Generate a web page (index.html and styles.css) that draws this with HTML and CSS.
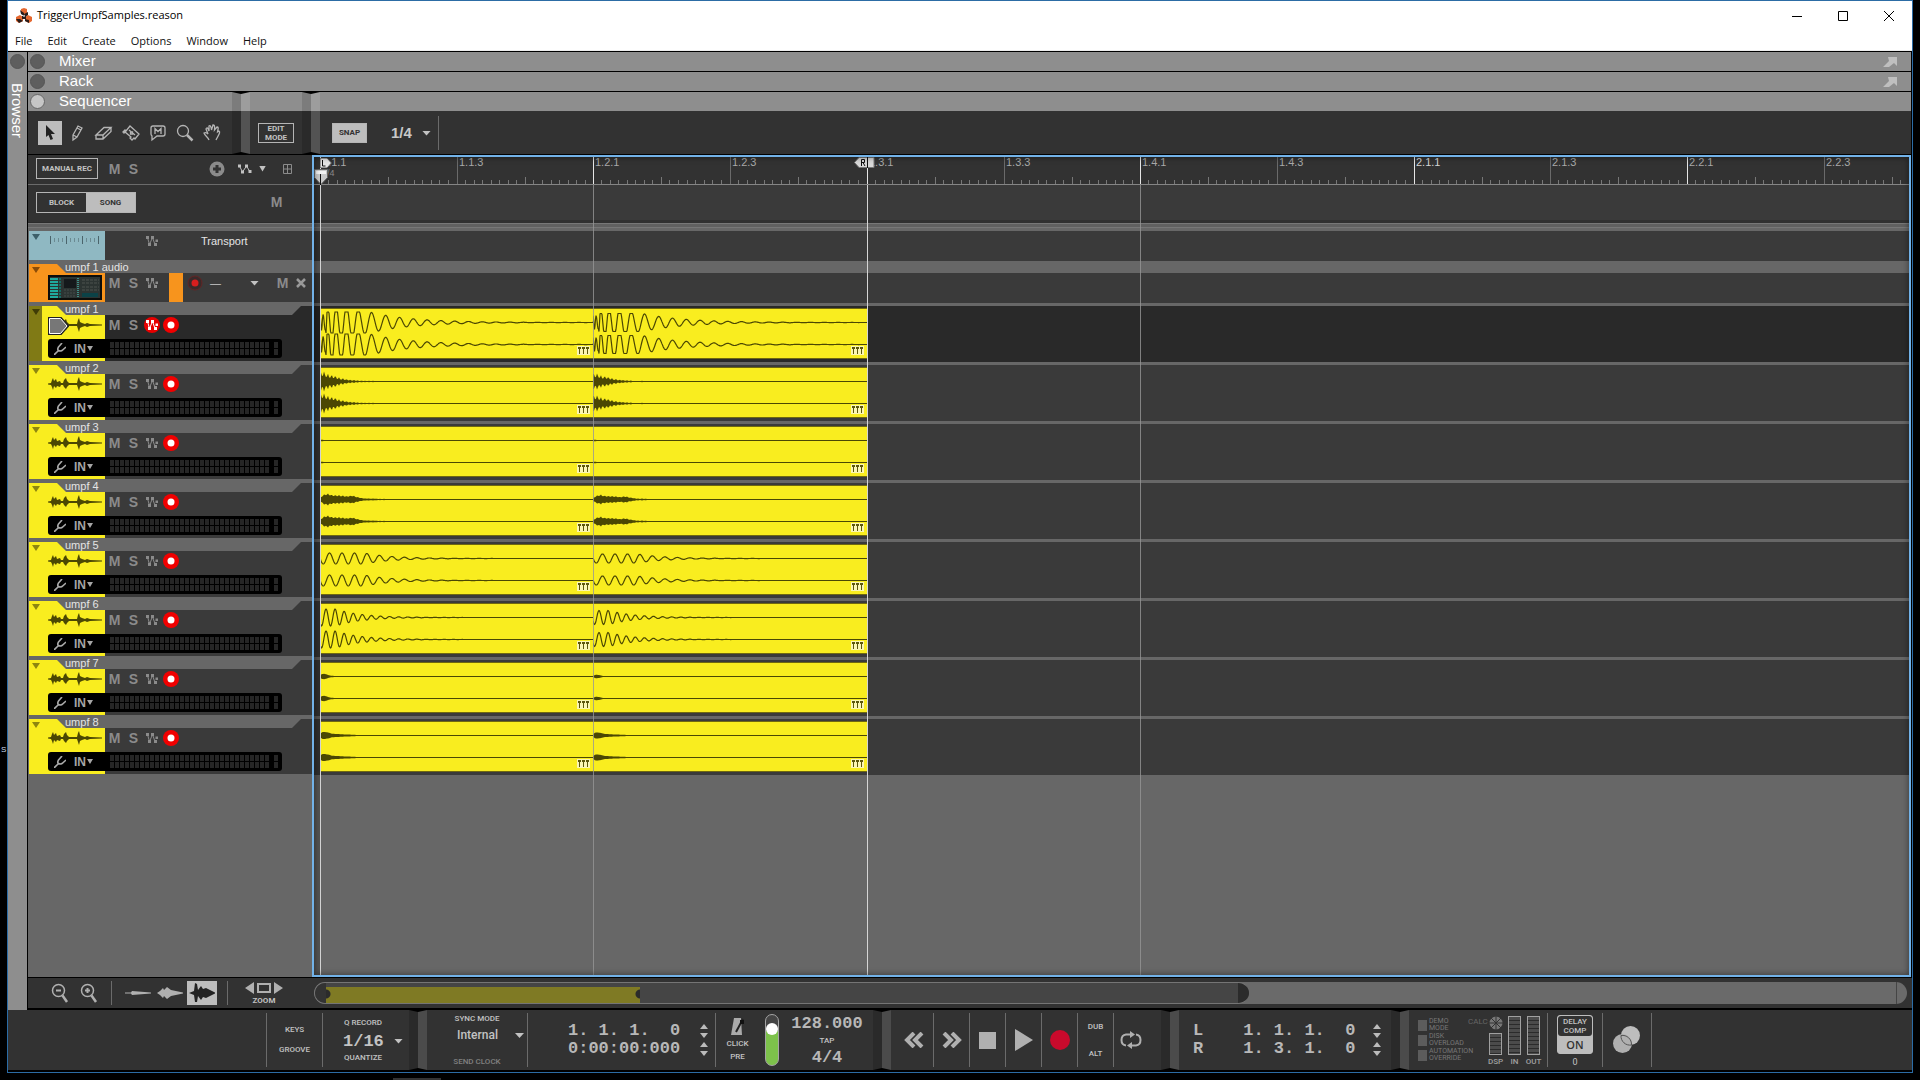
FILE: index.html
```html
<!DOCTYPE html>
<html lang="en">
<head>
<meta charset="utf-8">
<title>TriggerUmpfSamples.reason</title>
<link rel="stylesheet" href="styles.css">
</head>
<body>
<svg class="sprite" aria-hidden="true">
  <symbol id="auto" viewBox="0 0 14 12"><path d="M2.500 2.500 4.500 9.500 7.500 2.500 10 9.500" fill="none" stroke="currentColor"/><path d="M1 1h3v3H1zM3 8h3v3H3zM6 1h3v3H6zM9 8h3v3H9zM10.500 4.500H13V7h-2.500z" fill="currentColor"/></symbol>
  <symbol id="auto-wide" viewBox="0 0 14 12"><path d="M1.500 3 4.500 9 8.500 3 11.500 8" fill="none" stroke="currentColor"/><path d="M0 1.500h3v3H0zM3 7.500h3v3H3zM7 1.500h3v3H7zM10.500 7h3v3h-3z" fill="currentColor"/></symbol>
  <symbol id="wave" viewBox="0 0 54 16"><path d="M0 7.500 3 7 4 4 5 2 6 5 8 3 9 6 12 5 13 7 15 7 16 4 18 2 19 5 21 7 29 7 30 3 31 1 32 5 34 6 37 7 39 6 42 7 54 7.500V8.500L42 9 39 10 37 9 34 10 32 11 31 15 30 12 29 9 21 9 19 11 18 13 16 11 15 9 13 9 12 11 9 10 8 12 6 10 5 14 4 11 3 9 0 8.500z" fill="#4b4703"/></symbol>
  <symbol id="fork" viewBox="0 0 12 12"><path d="M0 12 4.500 7.500M8 0 4.500 4Q3 6.500 4.500 7.500T8 7.500L12 4" fill="none" stroke="#aaa" stroke-width="1.600"/></symbol>
  <symbol id="comp" viewBox="0 0 13 9"><path d="M0 0h13v9H0z" fill="#fbf6b4"/><path d="M1 1h3v2H3v5H2V3H1zM5 1h3v2H7v5H6V3H5zM9 1h3v2h-1v5h-1V3H9z" fill="#5c560b"/></symbol>
  <symbol id="popout" viewBox="0 0 14 10"><path d="M5 0h9v9l-3-3-5 4H0l6-6z" fill="#bfbfbf"/></symbol>
  <symbol id="ticks" viewBox="0 0 137 8"><path d="M8.500 4v4M17.500 4v4M25.500 4v4M34.500 4v4M42.500 4v4M51.500 4v4M59.500 4v4M68.500 1v7M76.500 4v4M85.500 4v4M94.500 4v4M102.500 4v4M111.500 4v4M119.500 4v4M128.500 4v4" stroke="#777"/></symbol>
  <symbol id="spin-up" viewBox="0 0 8 5"><path d="M0 5 4 0 8 5z" fill="#bbb"/></symbol>
  <symbol id="spin-down" viewBox="0 0 8 5"><path d="M0 0 4 5 8 0z" fill="#bbb"/></symbol>
</svg>

<div class="window">
  <header class="titlebar">
    <svg class="logo" viewBox="0 0 16 16"><path d="M5 1 8 0 11 1 11 5 8 7 5 5z" fill="#e4672f"/><path d="M0 9 4 7 7 9 7 13 3 15 0 13z" fill="#e4672f"/><path d="M9 9 12 7 16 9 16 13 13 15 9 13z" fill="#e4672f"/><path d="M4 2 8 5 8 8 5 6zM8 6 12 4 12 7 9 9zM0 11 4 11 7 13 3 15zM9 11l4 1v3l-4-2zM6 8h4v3H6z" fill="#2a1d1a"/><circle cx="8" cy="8" r="1" fill="#bbb"/></svg>
    <h1>TriggerUmpfSamples.reason</h1>
    <div class="winbtns">
      <button aria-label="Minimize"><svg width="10" height="10"><path d="M0 5.500h10" stroke="#000"/></svg></button>
      <button aria-label="Maximize"><svg width="10" height="10"><path d="M.5.5h9v9h-9z" fill="none" stroke="#000"/></svg></button>
      <button aria-label="Close"><svg width="10" height="10"><path d="M0 0 10 10M10 0 0 10" stroke="#000"/></svg></button>
    </div>
  </header>
  <nav class="menu">
    <a href="#">File</a><a href="#">Edit</a><a href="#">Create</a><a href="#">Options</a><a href="#">Window</a><a href="#">Help</a>
  </nav>

  <div class="workspace">
    <aside class="browser"><button class="dot" aria-label="Show browser"></button><span>Browser</span></aside>
    <main class="main">
      <div class="area"><button class="dot" aria-label="Show mixer"></button><h2>Mixer</h2><svg class="popout"><use href="#popout"/></svg></div>
      <div class="area"><button class="dot" aria-label="Show rack"></button><h2>Rack</h2><svg class="popout"><use href="#popout"/></svg></div>

      <div class="toolbar">
        <section class="module module-tools">
          <div class="modhead"><button class="dot on" aria-label="Show sequencer"></button><h2>Sequencer</h2></div>
          <div class="modbody tools">
            <button class="tool active" aria-label="Selection"><svg viewBox="0 0 24 24"><path d="M8 4 17 13 13 13 15 18 12.500 19 10.500 14 8 16z" fill="#222"/></svg></button>
            <button class="tool" aria-label="Pencil"><svg viewBox="0 0 24 24"><path d="M8 14 13 5 17 7 12 16 8 19zM8 14l4 2M12 7l4 2" class="ln"/></svg></button>
            <button class="tool" aria-label="Eraser"><svg viewBox="0 0 24 24"><path d="M4 14 12 6.500H19L11 14zM4 14v4h7l8-7.500v-4M11 14v4" class="ln"/></svg></button>
            <button class="tool" aria-label="Razor"><svg viewBox="0 0 24 24"><path d="M4 11 6 9 7 10 11 5 20 13 16 18 15 17 13 19 11 17 12 16 6 11 5 12z" class="ln"/><path d="M10 9l6 5M11.500 11h2v2h-2z" class="ln"/></svg></button>
            <button class="tool" aria-label="Mute"><svg viewBox="0 0 24 24"><path d="M7 5h10q2 0 2 2v6q0 2-2 2h-6l-5 4V15q-1-1-1-2V7q0-2 2-2zM9 13V7.500l3 3 3-3V13" class="ln"/></svg></button>
            <button class="tool" aria-label="Magnifying glass"><svg viewBox="0 0 24 24"><circle cx="10" cy="10" r="5.500" class="ln"/><path d="M14 14 19.500 19.500" stroke="#b5b5b5" stroke-width="2.500"/></svg></button>
            <button class="tool" aria-label="Hand"><svg viewBox="0 0 24 24"><path d="M9 19C8 16 5 15 4 12 6 11 7 12 8 13L6 8C7 6 8 7 9 10L9 5C10 4 11 5 11.500 9L13 4C14 4 15 4 14.500 9L17 6C19 6 18 8 17.500 11L19 10C21 11 18 15 16 19" class="ln"/></svg></button>
          </div>
        </section>
        <div class="bevel tall"><i></i></div>
        <section class="module module-edit">
          <div class="modhead"></div>
          <div class="modbody"><button class="boxed edit">EDIT<br>MODE</button></div>
        </section>
        <div class="bevel tall"><i></i></div>
        <section class="module module-snap">
          <div class="modhead"></div>
          <div class="modbody snaprow">
            <button class="boxed solid snap">SNAP</button>
            <label class="pick snapval"><select aria-label="Snap value"><option>1/4</option></select><i class="caret"></i></label>
            <i class="vline"></i>
          </div>
        </section>
      </div>

      <div class="sequencer">
        <section class="tracks">
          <div class="row rec">
            <button class="boxed manual">MANUAL REC</button>
            <button class="ms">M</button><button class="ms">S</button>
            <span class="grow"></span>
            <button class="add" aria-label="Add lane"><svg width="16" height="16"><circle cx="8" cy="8" r="7.500" fill="#8b8b8b"/><path d="M8 4v8M4 8h8" stroke="#333" stroke-width="3"/></svg></button>
            <button class="auto" aria-label="Track parameter automation"><svg width="14" height="12"><use href="#auto-wide"/></svg><i class="caret"></i></button>
            <button class="fold" aria-label="Fold tracks"><svg width="9" height="10"><path d="M.5.5h8v9h-8zM4.500 0v10M0 5h9" fill="none" stroke="#8b8b8b"/></svg></button>
          </div>
          <div class="row modes">
            <div class="toggle"><button>BLOCK</button><button class="on">SONG</button></div>
            <button class="ms">M</button>
          </div>
          <div class="splitter"></div>
          <div class="track transport">
            <div class="swatch"><i class="fold-arrow"></i><svg width="50" height="8"><path d="M.5 0v8M16.500 0v8M32.500 0v8M48.500 0v8" stroke="#4b646b"/><path d="M4.500 2v4M8.500 2v4M12.500 2v4M20.500 2v4M24.500 2v4M28.500 2v4M36.500 2v4M40.500 2v4M44.500 2v4" stroke="#6b8a92"/></svg></div>
            <div class="ctl"><button class="ico" aria-label="Automation"><svg width="14" height="12"><use href="#auto"/></svg></button><span class="tname">Transport</span></div>
          </div>
          <div class="track device">
            <div class="swatch"><i class="fold-arrow"></i></div>
            <div class="tab"><span>umpf 1 audio</span></div>
            <svg class="thumb" viewBox="0 0 54 25"><path d="M0 0h54v25H0z" fill="#0b0d0c"/><path d="M2 2h50v21H2z" fill="#2c3432"/><path d="M6 3v20" stroke="#1fa99d" stroke-width="8" stroke-dasharray="2 1" fill="none"/><path d="M12 3v20" stroke="#156b63" stroke-width="2" stroke-dasharray="2 1"/><path d="M16 4h12v9H16z" fill="#15191b"/><path d="M16 15h12M16 18h12M16 21h12" stroke="#444d4a" stroke-dasharray="2 1"/><path d="M30 3v20" stroke="#3f8f86" stroke-width="2" stroke-dasharray="1 1"/><path d="M34 5h17M34 8h17M34 12h17M34 15h17" stroke="#4c534e" stroke-dasharray="3 1"/><path d="M34 18h16v4H34z" fill="#0b4247"/></svg>
            <div class="ctl">
              <button class="ms">M</button><button class="ms">S</button><button class="ico" aria-label="Automation"><svg width="14" height="12"><use href="#auto"/></svg></button>
              <span class="colorchip"></span>
              <button class="ico" aria-label="Record enable"><svg width="16" height="16"><circle cx="8" cy="8" r="7" fill="#3a2a2a" stroke="#632525"/><circle cx="8" cy="8" r="3.500" fill="#d91e1e"/></svg></button>
              <span class="dash">—</span><i class="caret"></i>
              <button class="ms lanem">M</button>
              <button class="ico" aria-label="Delete lane"><svg width="10" height="10"><path d="M1 1 9 9M9 1 1 9" stroke="#999" stroke-width="2.500"/></svg></button>
            </div>
          </div>
          <div id="audio-tracks" class="audio-tracks"></div>
        </section>

        <section class="arrange">
          <div class="ruler">
            <div class="cell beat"><span>1.1.1</span><small>/4</small><svg><use href="#ticks"/></svg></div>
            <div class="cell"><span>1.1.3</span><svg><use href="#ticks"/></svg></div>
            <div class="cell beat"><span>1.2.1</span><svg><use href="#ticks"/></svg></div>
            <div class="cell"><span>1.2.3</span><svg><use href="#ticks"/></svg></div>
            <div class="cell beat"><span>1.3.1</span><svg><use href="#ticks"/></svg></div>
            <div class="cell"><span>1.3.3</span><svg><use href="#ticks"/></svg></div>
            <div class="cell beat"><span>1.4.1</span><svg><use href="#ticks"/></svg></div>
            <div class="cell"><span>1.4.3</span><svg><use href="#ticks"/></svg></div>
            <div class="cell beat bar"><span>2.1.1</span><svg><use href="#ticks"/></svg></div>
            <div class="cell"><span>2.1.3</span><svg><use href="#ticks"/></svg></div>
            <div class="cell beat"><span>2.2.1</span><svg><use href="#ticks"/></svg></div>
            <div class="cell"><span>2.2.3</span><svg><use href="#ticks"/></svg></div>
          </div>
          <div class="lane blocklane"></div>
          <div class="splitter"></div>
          <div class="lane transportlane"></div>
          <div class="lane devicelane"></div>
          <div id="lanes" class="lanes"></div>
          <i class="preroll"></i>
          <i class="grid g2"></i><i class="grid g4"></i>
          <i class="locline left"></i><i class="locline right"></i>
          <svg class="loc loc-l" width="12" height="10"><path d="M0 0h7l4.500 5L7 10H0z" fill="#e6e6e6" stroke="#555"/><path d="M2.500 2v6h3" fill="none" stroke="#111"/></svg>
          <svg class="loc loc-r" width="21" height="11"><path d="M.5 5.500 5 .5h15v10H5z" fill="#d8d8d8" stroke="#777"/><path d="M7.500 9V2.500h3v3h-3M9 5.500 11 9M13.500 0v11" fill="none" stroke="#111"/></svg>
          <svg class="loc playhead" width="14" height="16"><path d="M.5.5h13v8L7 15.500.5 8.500z" fill="#c9c9c9" stroke="#666"/><path d="M2 2h10v3H2z" fill="#f2f2f2"/><path d="M6.500 5v11" stroke="#111"/></svg>
        </section>
      </div>

      <div class="zoombar">
        <div class="zoomtools">
          <button aria-label="Zoom out"><svg width="18" height="22"><circle cx="7.500" cy="8.500" r="6" fill="none" stroke="#b0b0b0" stroke-width="1.500"/><path d="M5 8.500h5" stroke="#b0b0b0" stroke-width="2"/><path d="M11.500 13.500 16 20" stroke="#b0b0b0" stroke-width="2.500"/></svg></button>
          <button aria-label="Zoom in"><svg width="18" height="22"><circle cx="7.500" cy="8.500" r="6" fill="none" stroke="#b0b0b0" stroke-width="1.500"/><path d="M5 8.500h5M7.500 6v5" stroke="#b0b0b0" stroke-width="2"/><path d="M11.500 13.500 16 20" stroke="#b0b0b0" stroke-width="2.500"/></svg></button>
          <i class="vline"></i>
          <button class="wz" aria-label="Small waveforms"><svg width="26" height="22"><path d="M0 10.500 6 10.500 7 9 26 10.500V11.500L7 13 6 11.500H0z" fill="#b0b0b0"/></svg></button>
          <button class="wz" aria-label="Medium waveforms"><svg width="26" height="22"><path d="M0 11 3 9 6 6 7 8 10 5 14 8 26 10.500V11.500L14 14 10 17 7 14 6 16 3 13z" fill="#b0b0b0"/></svg></button>
          <button class="wz on" aria-label="Large waveforms"><svg width="26" height="22"><path d="M0 11 5 9 6 1 8 2 9 8 12 4 14 7 17 6 26 10.500V11.500L17 16 14 15 12 18 9 14 8 20 6 20 5 13z" fill="#222"/></svg></button>
          <i class="vline"></i>
          <button class="zoomfit"><svg width="38" height="12"><path d="M0 6 9 0v12zM38 6 29 0v12z" fill="#b0b0b0"/><path d="M13 2h12v8H13z" fill="none" stroke="#b0b0b0" stroke-width="2"/></svg>ZOOM</button>
        </div>
        <div class="overview">
          <div class="song"><i class="startcap"></i><div class="view"></div><i class="endcap"></i></div>
          <i class="lastcap"></i>
        </div>
      </div>
    </main>
  </div>

  <footer class="transportbar">
    <div class="blank"></div>
    <div class="tcol keys"><button>KEYS</button><button>GROOVE</button></div>
    <div class="tcol quant"><label for="q">Q RECORD</label><span class="pick qpick"><select id="q"><option>1/16</option></select><i class="caret"></i></span><button>QUANTIZE</button></div>
    <div class="bevel"><i></i></div>
    <div class="tcol sync"><label for="sync">SYNC MODE</label><span class="pick syncpick"><select id="sync"><option>Internal</option></select><i class="caret"></i></span><button class="dim">SEND CLOCK</button></div>
    <div class="tcol position">
      <div class="digits"><span>1. 1. 1.  0</span><span>0:00:00:000</span></div>
      <div class="spins"><button aria-label="Position up"><svg><use href="#spin-up"/></svg></button><button aria-label="Position down"><svg><use href="#spin-down"/></svg></button><button aria-label="Time up"><svg><use href="#spin-up"/></svg></button><button aria-label="Time down"><svg><use href="#spin-down"/></svg></button></div>
    </div>
    <div class="tcol click"><svg width="14" height="18"><path d="M3 1h7l1 17H0z" fill="#aaa"/><path d="M5 15 12 2" stroke="#222" stroke-width="2"/><path d="M9 3h4v4H9z" fill="#111"/></svg><button>CLICK</button><button>PRE</button></div>
    <input class="level" type="range" min="0" max="100" value="78" aria-label="Click level">
    <div class="tcol tempo"><span class="big">128.000</span><button>TAP</button><span class="big">4/4</span></div>
    <div class="bevel"><i></i></div>
    <button class="tbtn" aria-label="Rewind"><svg width="20" height="16"><path d="M10 1 3 8 10 15M18 1 11 8 18 15" class="chev"/></svg></button>
    <button class="tbtn" aria-label="Fast forward"><svg width="20" height="16"><path d="M2 1 9 8 2 15M10 1 17 8 10 15" class="chev"/></svg></button>
    <button class="tbtn" aria-label="Stop"><svg width="17" height="17"><path d="M0 0h17v17H0z" fill="#b0b0b0"/></svg></button>
    <button class="tbtn" aria-label="Play"><svg width="18" height="22"><path d="M0 0 18 11 0 22z" fill="#b0b0b0"/></svg></button>
    <button class="tbtn" aria-label="Record"><svg width="20" height="20"><circle cx="10" cy="10" r="10" fill="#c90a2c"/></svg></button>
    <div class="tcol dub"><button>DUB</button><button>ALT</button></div>
    <button class="tbtn loop" aria-label="Loop"><svg width="22" height="18"><path d="M11 3.500H6Q1.500 4 1.500 9T6 14.500M11 14.500h5q4.500-.5 4.500-5.500T16 3.500" fill="none" stroke="#b0b0b0" stroke-width="2"/><path d="M10 0l5 3.500L10 7zM12 11l-5 3.500L12 18z" fill="#b0b0b0"/></svg></button>
    <div class="bevel"><i></i></div>
    <div class="tcol locs">
      <div class="digits"><span>L</span><span>R</span></div>
      <div class="digits"><span>1. 1. 1.  0</span><span>1. 3. 1.  0</span></div>
      <div class="spins"><button aria-label="Left locator up"><svg><use href="#spin-up"/></svg></button><button aria-label="Left locator down"><svg><use href="#spin-down"/></svg></button><button aria-label="Right locator up"><svg><use href="#spin-up"/></svg></button><button aria-label="Right locator down"><svg><use href="#spin-down"/></svg></button></div>
    </div>
    <div class="bevel"><i></i></div>
    <div class="tcol status">
      <ul class="lamps"><li>DEMO<br>MODE</li><li>DISK<br>OVERLOAD</li><li>AUTOMATION<br>OVERRIDE</li></ul>
      <div class="calc">CALC</div>
      <div class="mcol"><svg width="14" height="14"><circle cx="7" cy="7" r="6.500" fill="#777"/><path d="M7 0v14M0 7h14M2 2 12 12M12 2 2 12" stroke="#333"/></svg><i class="meter short"></i>DSP</div>
      <div class="mcol"><i class="meter"></i>IN</div>
      <div class="mcol"><i class="meter"></i>OUT</div>
    </div>
    <div class="tcol delay"><button class="comp"><span>DELAY<br>COMP</span><b>ON</b></button><small>0</small></div>
    <div class="tcol logo2"><svg width="28" height="28"><circle cx="17.500" cy="9.500" r="9.500" fill="#bdbdbd"/><circle cx="9.500" cy="17.500" r="9.500" fill="#b0b0b0"/><path d="M8 9.500A9 9 0 0 0 18.500 19M8 9.500A9 9 0 0 1 18.500 19" fill="none" stroke="#555"/></svg></div>
    <div class="blank end"></div>
  </footer>
</div>
<span class="desk-label">S</span>
<i class="task-edge"></i>
<script src="app.js"></script>
</body>
</html>
```
FILE: styles.css
```css
* { box-sizing: border-box; }
body { margin: 0; min-height: 100vh; background: #000; color: #c8c8c8; font: 11px "Liberation Sans", Arial, sans-serif; overflow: hidden; position: relative; }
h1, h2 { margin: 0; font-weight: 400; }
ul { list-style: none; margin: 0; padding: 0; }
button, select { margin: 0; padding: 0; border: 0; background: none; color: inherit; font: inherit; border-radius: 0; appearance: none; display: flex; align-items: center; justify-content: center; }
i { display: block; flex: none; }
svg { display: block; flex: none; }
.sprite { position: absolute; width: 0; height: 0; }
.grow { flex: 1; }
.ln { fill: none; stroke: #b5b5b5; stroke-width: 1.3; }
.caret { width: 9px; height: 5px; background: #c2c2c2; clip-path: polygon(0 0, 100% 0, 50% 100%); }
.vline { width: 1px; background: #6b6b6b; }

.window { margin: 0 7px; min-height: calc(100vh - 7px); border: 1px solid #2c6ca5; background: #000; display: flex; flex-direction: column; }
.titlebar { height: 30px; background: #fff; color: #000; display: flex; align-items: center; padding-left: 8px; }
.logo { width: 16px; height: 16px; margin-right: 5px; }
.titlebar h1 { flex: 1; font: 11px/16px "Open Sans", sans-serif; padding-bottom: 2px; }
.winbtns { display: flex; }
.winbtns button { width: 46px; height: 28px; }
.menu { height: 20px; background: #fff; border-bottom: 1px solid #eee; display: flex; gap: 15px; padding-left: 7px; font: 11px/20px "Open Sans", sans-serif; }
.menu a { color: #111; text-decoration: none; }

.workspace { flex: 1; display: flex; margin-top: 1px; min-height: 0; }
.browser { width: 19px; background: #8e8e8e; display: flex; flex-direction: column; align-items: center; padding-top: 2px; gap: 14px; margin-right: 1px; color: #fff; font-size: 15px; padding-right: 1px; }
.browser span { writing-mode: vertical-rl; line-height: 17px; }
.dot { width: 15px; height: 15px; border-radius: 50%; background: #5e5e5e; border: 1px solid #555; }
.dot.on { background: #c6c6c6; border: 1px solid #666; }
.main { flex: 1; min-width: 0; display: flex; flex-direction: column; }
.area { height: 19px; margin-bottom: 1px; background: #8e8e8e; display: flex; align-items: center; padding: 0 14px 0 2px; margin-right: 1px; }
.area h2, .modhead h2 { font-size: 15px; line-height: 17px; padding-bottom: 2px; color: #fff; margin-left: 14px; flex: 1; }
.popout { width: 14px; height: 10px; }

.toolbar { display: flex; height: 62px; margin-bottom: 1px; margin-right: 1px; }
.module { display: flex; flex-direction: column; }
.modhead { height: 19px; background: #8e8e8e; display: flex; align-items: center; padding-left: 2px; }
.modbody { flex: 1; background: #323232; display: flex; align-items: center; }
.module-tools { width: 204px; }
.module-edit { width: 52px; }
.module-snap { flex: 1; }
.tools { gap: 3px; padding-left: 10px; }
.tool { width: 24px; height: 24px; }
.tool svg { width: 24px; height: 24px; }
.tool.active { background: #bdbdbd; }
.boxed { border: 1px solid #b5b5b5; color: #c2c2c2; font: 700 8px/9px Roboto, sans-serif; }
.boxed.solid { background: #bdbdbd; color: #333; }
.edit { width: 36px; height: 20px; margin: 0 auto; }
.snap { width: 35px; height: 20px; margin-left: 12px; }
.pick { position: relative; display: flex; align-items: center; }
.pick select { width: 100%; height: 18px; }
.pick .caret { position: absolute; right: 0; top: 7px; pointer-events: none; }
.snapval { width: 40px; margin-left: 24px; font: 700 15px "Liberation Sans", Arial, sans-serif; }
.snaprow .vline { height: 34px; margin-left: 7px; }
.bevel { width: 18px; position: relative; background: linear-gradient(90deg, #2a2a2a 50%, #4b4b4b 50%); flex: none; }
.bevel.tall { background: linear-gradient(90deg, #7c7c7c 50%, #9d9d9d 50%) top/100% 19px no-repeat, linear-gradient(90deg, #2a2a2a 50%, #535353 50%); }
.bevel::before, .bevel::after { content: ""; position: absolute; left: 0; right: 0; height: 2px; background: #000; clip-path: polygon(0 0, 100% 0, 50% 100%); }
.bevel::before { top: 0; }
.bevel::after { bottom: 0; clip-path: polygon(0 100%, 100% 100%, 50% 0); }

.sequencer { flex: 1; display: flex; min-height: 0; margin-bottom: 1px; }
.tracks { width: 284px; flex: none; background: #676767; display: flex; flex-direction: column; }
.row { background: #323232; display: flex; align-items: center; padding-left: 8px; }
.rec { height: 30px; border-bottom: 1px solid #6b6b6b; padding-bottom: 2px; }
.manual { width: 62px; height: 21px; margin-right: 7px; }
.ms { width: 19px; height: 20px; font: 700 14px "Liberation Sans", Arial, sans-serif; color: #8b8b8b; }
.auto { gap: 7px; margin-left: 13px; color: #c2c2c2; }
.auto .caret { width: 7px; height: 6px; }
.fold { margin-left: 17px; margin-right: 20px; }
.modes { height: 38px; padding-bottom: 3px; justify-content: space-between; padding-right: 26px; border-bottom: 1px solid #2b2b2b; }
.toggle { display: flex; border: 1px solid #b5b5b5; height: 21px; width: 100px; font: 700 8px Roboto, sans-serif; color: #c2c2c2; }
.toggle button { flex: 1; }
.toggle .on { background: #bdbdbd; color: #333; }
.splitter { height: 8px; background: linear-gradient(#777 1px, #606060 1px 4px, #777 4px 5px, #676767 5px); }
.track { display: grid; grid-template-columns: 76px 1fr; grid-template-rows: 9px 24px 22px; margin: 0 0 4px 1px; background: #3a3a3a; }
.track.transport { grid-template-rows: 29px; }
.track.device { grid-template-rows: 9px 29px; }
.swatch { grid-area: 1 / 1 / -1 / 2; background: #f9ed1f; }
.transport .swatch { background: #8fb8c2; display: flex; align-items: flex-start; gap: 10px; padding-top: 5px; }
.transport .fold-arrow { background: #3d5f69; margin-top: -2px; }
.device .swatch { background: #f7941d; }
.device .fold-arrow { background: #8a4c08; }
.fold-arrow { width: 8px; height: 6px; background: #8d8610; clip-path: polygon(0 0, 100% 0, 50% 100%); margin: 3px 0 0 3px; }
.tab { grid-area: 1 / 1 / 2 / -1; margin: 0 11px 0 28px; position: relative; background: none; }
.tab::before { content: ""; position: absolute; inset: 0; background: #676767; clip-path: polygon(0 0, 100% 0, calc(100% - 9px) 100%, 9px 100%); }
.device .tab { margin-right: 0; }
.device .tab::before { clip-path: polygon(0 0, 100% 0, 100% 100%, 9px 100%); }
.tab span { position: relative; display: block; padding-left: 8px; line-height: 7px; color: #e4e4e4; }
.ctl { grid-area: 2 / 2 / 3 / 3; display: flex; height: 20px; align-items: center; }
.transport .ctl { grid-area: 1 / 2 / 2 / 3; padding-left: 38px; height: 19px; }
.tname { margin-left: 39px; color: #e4e4e4; font-size: 11px; }
.ico { width: 19px; height: 20px; color: #8b8b8b; padding-right: 1px; }
.thumb { grid-area: 2 / 1 / 3 / 2; width: 54px; height: 25px; margin: 2px 0 0 19px; }
.colorchip { width: 14px; height: 29px; margin-left: 7px; align-self: flex-start; background: #f7941d; margin-right: 3px; }
.dash { margin-left: 5px; width: 40px; }
.lanem { margin-left: 14px; }
.wave { grid-area: 2 / 1 / 3 / 2; width: 54px; height: 16px; margin: 2px 0 0 19px; }
.input { grid-area: 3 / 1 / 4 / 3; width: 234px; height: 19px; margin-left: 19px; background: #000; border-radius: 3px; display: flex; align-items: center; padding-left: 6px; position: relative; }
.input button { font: 700 12px "Liberation Sans", Arial, sans-serif; color: #a6a6a6; }
.input .in { margin-left: 8px; gap: 1px; }
.input .caret { width: 6px; height: 5px; background: #a6a6a6; }
.vu { width: 159px; height: 13px; margin-left: 17px; background: linear-gradient(#000, #000) 0 6px/100% 1px no-repeat, repeating-linear-gradient(90deg, #262626 0 4px, #000 4px 5px); }
.clip-led { width: 4px; height: 13px; margin-left: 5px; background: linear-gradient(#262626 6px, #000 6px 7px, #262626 7px); }
.track.selected { background: #292929; }
.selected .swatch { border-left: 13px solid #807a15; }
.selected .fold-arrow { margin-left: -10px; background: #3f3c06; }
.master { grid-area: 2 / 1 / 3 / 2; margin: 2px 0 0 19px; }

.arrange { flex: 1; min-width: 0; border: 2px solid #72b2e8; background: #676767; position: relative; display: flex; flex-direction: column; overflow: hidden; margin-right: 1px; }
.arrange::after { content: ""; position: absolute; inset: 0; box-shadow: inset 0 0 6px rgba(0, 0, 0, .5); pointer-events: none; }
.ruler { height: 28px; background: #323232; border-bottom: 1px solid #858585; display: grid; grid-template-columns: 137px 136px 137px 137px 137px 136px 137px 137px 136px 137px 137px 137px; padding-left: 6px; overflow: hidden; }
.cell { border-left: 1px solid #6a6a6a; display: flex; flex-wrap: wrap; align-content: space-between; min-width: 0; overflow: hidden; }
.cell span { line-height: 10px; padding-left: 1px; width: 100%; color: #a9a9a9; }
.cell small { position: absolute; left: 13px; top: 11px; font-size: 9px; color: #888; }
.cell svg { width: 137px; height: 8px; margin-left: -1px; }
.cell.beat { border-left-color: #e6e6e6; }
.cell.bar span { color: #d5d5d5; }
.lane { background: #3a3a3a; }
.blocklane { height: 38px; border-bottom: 3px solid #303030; }
.transportlane { height: 30px; margin-bottom: 12px; }
.devicelane { height: 30px; margin-bottom: 3px; }
.lanes { display: flex; flex-direction: column; gap: 3px; }
.lanes .lane { height: 56px; padding: 2px 0 0 6px; display: flex; align-items: flex-start; }
.lanes .lane.selected { background: #292929; }
.clip { height: 51px; background: #f9ed1f; border: solid #6f6811; border-width: 1px 0; position: relative; overflow: hidden; flex: none; }
.clip.first { width: 273px; }
.clip.second { width: 274px; }
.clip .comp { position: absolute; right: 3px; bottom: 3px; width: 13px; height: 9px; }
.preroll { position: absolute; left: 0; width: 6px; top: 28px; bottom: 0; background: rgba(0, 0, 0, .2); }
.grid { position: absolute; top: 28px; bottom: 0; width: 1px; background: rgba(150, 150, 150, .8); }
.g2 { left: 279px; }
.g4 { left: 826px; }
.locline { position: absolute; top: 28px; bottom: 0; width: 1px; background: #d5d5d5; }
.locline.left { left: 6px; }
.locline.right { left: 553px; }
.loc { position: absolute; }
.loc-l { left: 6px; top: 1px; }
.loc-r { left: 540px; top: 0; }
.playhead { left: 0; top: 12px; }

.zoombar { height: 30px; background: #323232; display: flex; align-items: center; margin-bottom: 2px; }
.zoomtools { width: 286px; display: flex; align-items: center; height: 24px; padding-left: 23px; flex: none; }
.zoomtools > button { width: 18px; height: 24px; margin-right: 11px; }
.zoomtools .vline { align-self: stretch; margin-left: 2px; margin-right: 11px; }
.zoomtools > .wz { width: 30px; margin-right: 2px; }
.zoomtools > .wz.on { background: #bdbdbd; margin-right: 8px; }
.zoomtools > .zoomfit { width: 50px; margin: 0; flex-direction: column; gap: 2px; font: 700 8px/9px Roboto, sans-serif; color: #c2c2c2; }
.overview { flex: 1; height: 22px; margin-right: 5px; background: #6a6a6a; border-radius: 11px; overflow: hidden; display: flex; justify-content: space-between; }
.song { width: 58.7%; background: #454545; border: 1px solid #757575; border-radius: 11px; display: flex; overflow: hidden; border-right: 0; }
.startcap { width: 11px; background: #333; }
.view { width: 33.6%; margin-top: 4px; background: radial-gradient(circle at 0 7px, #2b2b2b 4px, transparent 5px), radial-gradient(circle at 100% 7px, #2b2b2b 4px, transparent 5px), #7f7a24; }
.endcap { width: 11px; margin-left: auto; background: #2b2b2b; }
.lastcap { width: 11px; border-left: 1px solid #454545; }

.transportbar { height: 60px; background: #323232; display: flex; align-items: stretch; margin-bottom: 2px; font: 500 8px/10px Roboto, sans-serif; color: #c2c2c2; }
.blank { width: 258px; flex: none; }
.blank.end { flex: 1; border-left: 1px solid #6b6b6b; margin: 3px 0; }
.tcol { display: flex; flex-direction: column; align-items: center; flex: none; margin: 3px 0; border-left: 1px solid #6b6b6b; }
.bevel + .tcol { border-left: 0; }
.keys { width: 56px; justify-content: center; gap: 10px; }
.quant { width: 87px; justify-content: center; padding-right: 6px; }
.qpick { width: 60px; margin-left: 20px; font: 700 17px "Liberation Mono", monospace; margin-top: 4px; margin-bottom: 3px; }
.sync { width: 100px; padding-top: 1px; }
.syncpick { width: 67px; margin-left: 27px; margin-top: 2px; margin-bottom: 2px; font: 500 12px Roboto, sans-serif; }
.sync .dim { margin-top: 11px; color: #808080; }
.digits { display: flex; flex-direction: column; font: 700 17px/18px "Liberation Mono", monospace; white-space: pre; color: #b8b8b8; }
.position { width: 188px; flex-direction: row; padding-left: 40px; }
.spins { display: flex; flex-direction: column; gap: 4px; margin-left: 20px; }
.spins svg { width: 8px; height: 5px; }
.click { width: 50px; padding-top: 4px; padding-right: 6px; }
.click button:first-of-type { margin-top: 4px; }
.click button + button { margin-top: 3px; }
.level { appearance: none; writing-mode: vertical-lr; direction: rtl; width: 14px; height: 52px; margin: 4px 0 0; border: 1px solid #a5a5a5; border-radius: 7px; background: linear-gradient(#444 16px, #7dc24b 16px); flex: none; }
.level::-webkit-slider-thumb { appearance: none; width: 12px; height: 12px; border-radius: 50%; background: #fff; }
.tempo { width: 94px; border-left: 0; justify-content: space-between; padding-top: 2px; padding-left: 2px; }
.big { font: 700 17px/18px "Liberation Mono", monospace; color: #b8b8b8; }
.tbtn { width: 36px; flex: none; border-left: 1px solid #6b6b6b; margin: 3px 0; }
.bevel + .tbtn { border-left: 0; width: 42px; padding-left: 4px; }
.chev { fill: none; stroke: #b0b0b0; stroke-width: 4; }
.tbtn.loop { width: 48px; padding-right: 30px; padding-left: 16px; }
.dub { width: 36px; justify-content: center; gap: 17px; }
.locs { width: 212px; flex-direction: row; padding-left: 14px; }
.locs .digits + .digits { margin-left: 40px; }
.locs .spins { margin-left: 18px; }
.status { width: 138px; flex-direction: row; align-items: stretch; padding: 3px 0 0 9px; color: #a0a0a0; }
.lamps { width: 50px; padding-top: 2px; font: 7px/7px Roboto, sans-serif; color: #777; display: flex; flex-direction: column; gap: 1px; flex: none; }
.lamps li { height: 14px; padding-left: 11px; white-space: nowrap; background: linear-gradient(#5c5c5c, #5c5c5c) 0 2px/9px 11px no-repeat; }
.calc { width: 18px; color: #666; font-weight: 400; flex: none; text-align: right; padding-top: 1px; }
.mcol { width: 19px; display: flex; flex-direction: column; align-items: center; gap: 3px; line-height: 8px; flex: none; }
.meter { width: 13px; height: 39px; border: 1px solid #a0a0a0; background: repeating-linear-gradient(#4b4b4b 0 3px, #2b2b2b 3px 4px); }
.meter.short { height: 22px; }
.delay { width: 55px; padding-top: 2px; }
.delay .comp { flex-direction: column; width: 36px; height: 39px; border: 1px solid #bdbdbd; border-radius: 3px; background: #bdbdbd; justify-content: space-between; font-size: 8px; line-height: 9px; }
.comp span { background: #323232; border-radius: 3px; width: 100%; height: 20px; display: flex; align-items: center; justify-content: center; text-align: center; }
.comp b { font: 600 11px/17px "Open Sans", sans-serif; color: #333; }
.delay small { font: 9px/12px Roboto, sans-serif; margin-top: 2px; }
.logo2 { width: 49px; justify-content: center; }

.desk-label { position: absolute; left: 1px; top: 745px; color: #cde; font-size: 8px; }
.task-edge { position: absolute; left: 393px; bottom: 0; width: 48px; height: 2px; background: #333; }
```
FILE: app.js
```js
// Waveform shapes: oscPath draws a decaying oscillation, burstPath a filled envelope.
const AMP_LIMIT = 10.5;
const MID = [13.5, 35.5];

function lerpTable(table, x) {
  for (let i = 1; i < table.length; i++) {
    if (x <= table[i][0]) {
      const [x0, y0] = table[i - 1];
      const [x1, y1] = table[i];
      return y0 + (y1 - y0) * (x - x0) / (x1 - x0);
    }
  }
  return table[table.length - 1][1];
}

function phaseAt(peaks, period, x) {
  const last = peaks.length - 1;
  if (x >= peaks[last]) return last + (x - peaks[last]) / period;
  for (let i = 1; i <= last; i++) {
    if (x < peaks[i]) return i - 1 + (x - peaks[i - 1]) / (peaks[i] - peaks[i - 1]);
  }
  return 0;
}

function oscPath(spec, mid, width, scale) {
  let d = "";
  const limit = AMP_LIMIT * (scale < 1 ? 0.86 : 1);
  for (let x = 0; x <= width; x += 0.5) {
    const v = spec.env(x) * scale * Math.cos(2 * Math.PI * phaseAt(spec.peaks, spec.period, x));
    const y = mid - Math.max(-limit, Math.min(limit, v));
    d += (d ? "L" : "M") + x + " " + y.toFixed(1);
  }
  return `<path d="${d}" fill="none" stroke="#4b4703" stroke-width="1.2"/>`;
}

function burstPath(spec, mid, width, scale) {
  const end = spec.table[spec.table.length - 1][0];
  let top = "M0 " + mid;
  let bottom = "";
  for (let x = 0; x <= end; x++) {
    const jag = spec.rough ? 1 - spec.rough * Math.abs(Math.sin(x * 2.3 + 0.4)) : 1;
    const a = lerpTable(spec.table, x) * jag * scale;
    top += `L${x} ${(mid - a).toFixed(1)}`;
    bottom = `L${x} ${(mid + a).toFixed(1)}` + bottom;
  }
  return `<path d="${top}${bottom}Z" fill="#4b4703"/><path d="M0 ${mid}H${width}" stroke="#4b4703"/>`;
}

const tracks = [
  { name: "umpf 1", selected: true, draw: oscPath, second: 0.85,
    spec: { peaks: [0, 3, 7.7, 16, 26.4, 38.3, 51.6, 65.8], period: 13.8,
      env: x => x < 6 ? 8 : Math.min(17, 10 * Math.exp(-(x - 51.6) / 42)) } },
  { name: "umpf 2", draw: burstPath, second: 0.8,
    spec: { rough: 0.55, table: [[0, 12], [4, 11], [8, 8], [14, 7], [20, 4], [30, 2], [40, 1], [80, 0.3]] } },
  { name: "umpf 3", draw: burstPath, second: 1, spec: { table: [[0, 0.8], [3, 0.8], [4, 0.3]] } },
  { name: "umpf 4", draw: burstPath, second: 0.8,
    spec: { rough: 0.3, table: [[0, 2], [3, 5], [7, 6.5], [12, 5], [20, 4.5], [27, 3.6], [32, 4.5], [38, 2.5], [44, 1.2], [60, 0.8], [76, 0.3]] } },
  { name: "umpf 5", draw: oscPath, second: 0.82,
    spec: { peaks: [-3, 9.5], period: 12.5, env: x => x < 44 ? 5.5 : 5.5 * Math.exp(-(x - 44) / 28) } },
  { name: "umpf 6", draw: oscPath, second: 0.82,
    spec: { peaks: [-3, 6], period: 9.1, env: x => x < 16 ? 8.5 : 8.5 * Math.exp(-(x - 16) / 25) } },
  { name: "umpf 7", draw: burstPath, second: 0.65, spec: { table: [[0, 1], [2, 2.4], [4, 2.8], [7, 2], [10, 0.9], [18, 0.3]] } },
  { name: "umpf 8", draw: burstPath, second: 0.85, spec: { table: [[0, 1.5], [2, 3.2], [4, 3.6], [8, 3], [12, 1.8], [22, 1.2], [44, 0.3]] } }
];

function clip(track, cls, width, scale) {
  const waves = MID.map(m => track.draw(track.spec, m, width, scale)).join("");
  return `<div class="clip ${cls}"><svg width="${width}" height="49">${waves}</svg><svg class="comp"><use href="#comp"/></svg></div>`;
}

function header(t) {
  const autoIcon = t.selected
    ? '<svg width="16" height="16"><circle cx="8" cy="8" r="8" fill="#e80000"/><use href="#auto" x="1" y="2" width="14" height="12" color="#fff"/></svg>'
    : '<svg width="14" height="12"><use href="#auto"/></svg>';
  const master = t.selected
    ? '<svg class="master" width="21" height="18"><path d="M1 1h12l7 8-7 8H1z" fill="#777" stroke="#222" stroke-width="2"/><path d="M1.500 1.500h11l6.500 7.500-6.500 7.500h-11z" fill="#777" stroke="#fff"/></svg>'
    : "";
  return `<div class="track${t.selected ? " selected" : ""}">
    <div class="swatch"><i class="fold-arrow"></i></div>
    <div class="tab"><span>${t.name}</span></div>
    <svg class="wave"><use href="#wave"/></svg>${master}
    <div class="ctl">
      <button class="ms">M</button><button class="ms">S</button>
      <button class="ico" aria-label="Automation record">${autoIcon}</button>
      <button class="ico" aria-label="Record enable"><svg width="16" height="16"><circle cx="8" cy="8" r="8" fill="#f00000"/><circle cx="8" cy="8" r="3.500" fill="#fff"/></svg></button>
    </div>
    <div class="input"><button aria-label="Tuner"><svg width="12" height="12"><use href="#fork"/></svg></button><button class="in">IN<i class="caret"></i></button><i class="vu"></i><i class="clip-led"></i></div>
  </div>`;
}

document.getElementById("audio-tracks").innerHTML = tracks.map(header).join("");
document.getElementById("lanes").innerHTML = tracks.map(t =>
  `<div class="lane${t.selected ? " selected" : ""}">${clip(t, "first", 273, 1)}${clip(t, "second", 274, t.second)}</div>`).join("");
```
